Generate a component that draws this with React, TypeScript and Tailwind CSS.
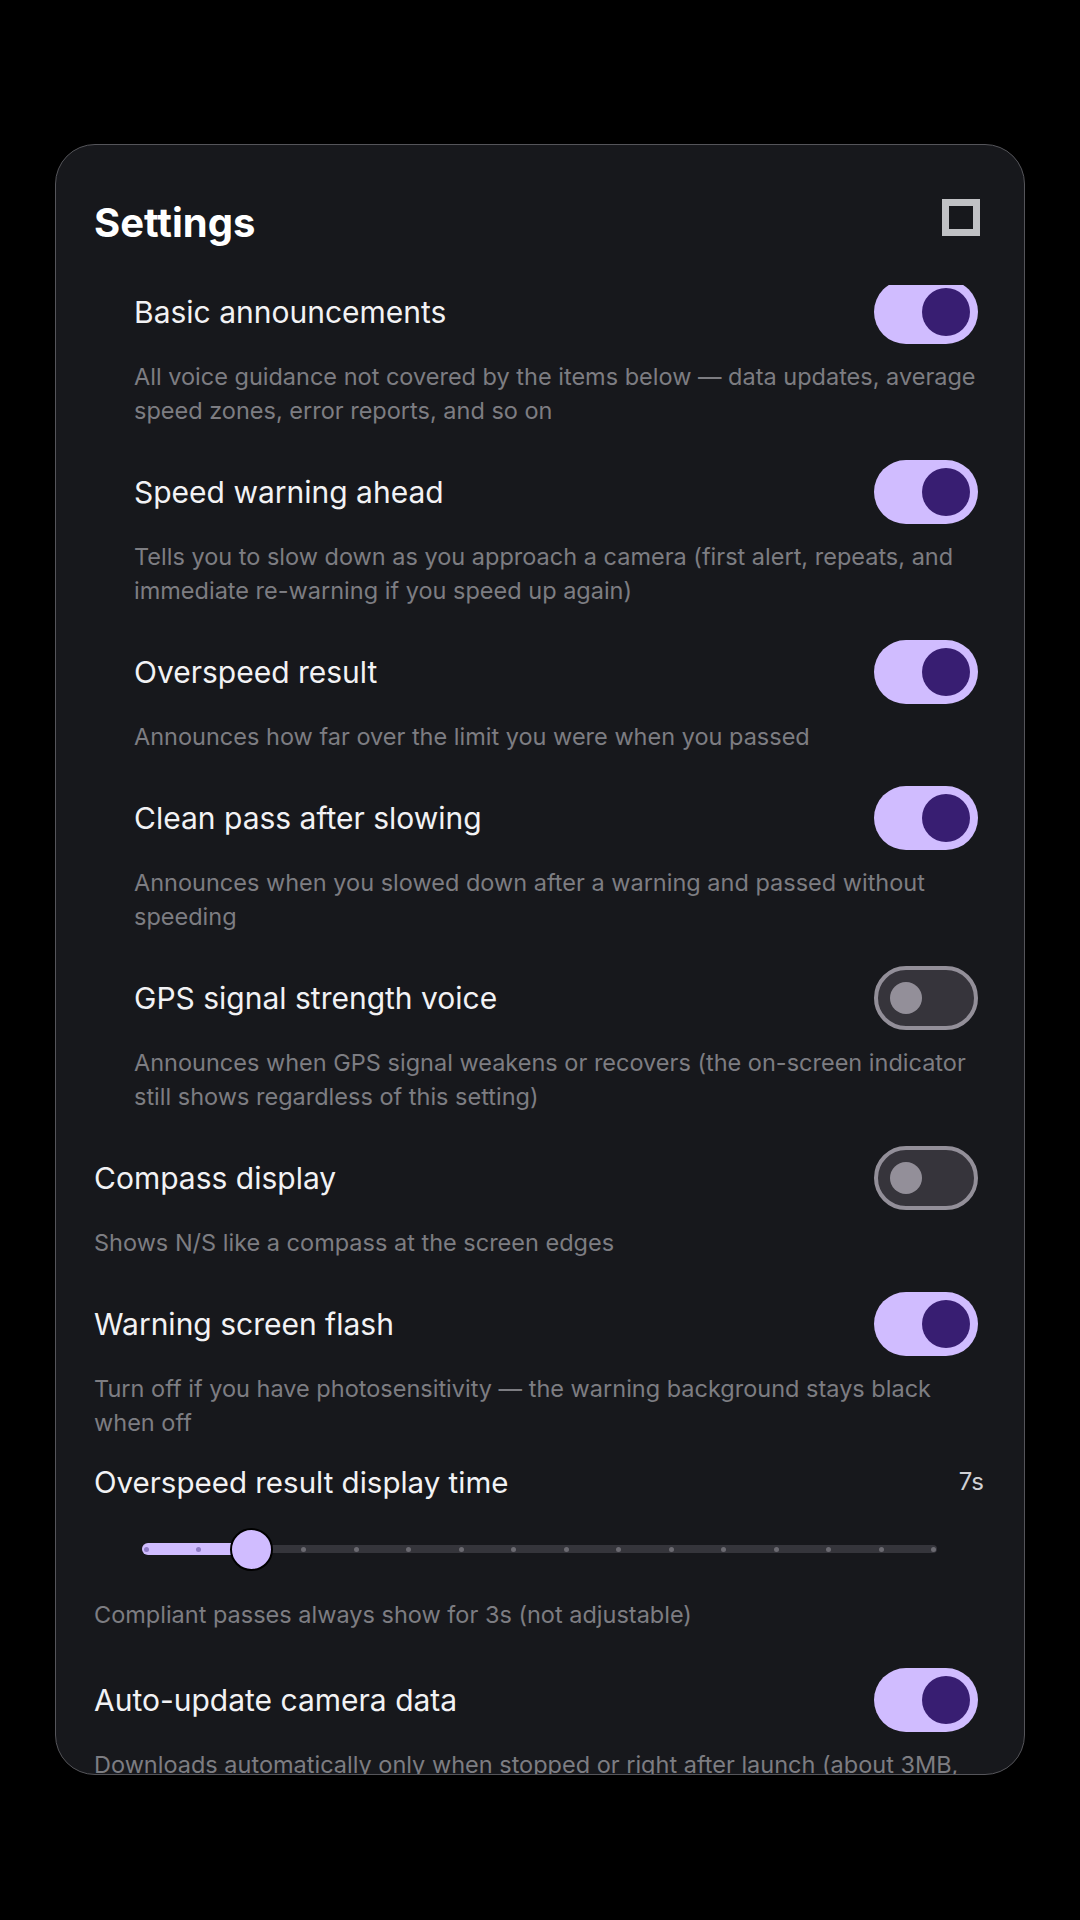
import React from "react";

type Item = {
  label: string;
  desc: string;
  on: boolean;
  nested?: boolean;
};

const items: Item[] = [
  {
    label: "Basic announcements",
    desc: "All voice guidance not covered by the items below — data updates, average speed zones, error reports, and so on",
    on: true,
    nested: true,
  },
  {
    label: "Speed warning ahead",
    desc: "Tells you to slow down as you approach a camera (first alert, repeats, and immediate re-warning if you speed up again)",
    on: true,
    nested: true,
  },
  {
    label: "Overspeed result",
    desc: "Announces how far over the limit you were when you passed",
    on: true,
    nested: true,
  },
  {
    label: "Clean pass after slowing",
    desc: "Announces when you slowed down after a warning and passed without speeding",
    on: true,
    nested: true,
  },
  {
    label: "GPS signal strength voice",
    desc: "Announces when GPS signal weakens or recovers (the on-screen indicator still shows regardless of this setting)",
    on: false,
    nested: true,
  },
  {
    label: "Compass display",
    desc: "Shows N/S like a compass at the screen edges",
    on: false,
  },
  {
    label: "Warning screen flash",
    desc: "Turn off if you have photosensitivity — the warning background stays black when off",
    on: true,
  },
];

function Toggle({ on }: { on: boolean }) {
  if (on) {
    return (
      <div className="mr-[6px] flex h-[64px] w-[104px] shrink-0 items-center justify-end rounded-full bg-[#d0bcff] pr-[8px]">
        <div className="h-[48px] w-[48px] rounded-full bg-[#381e72]" />
      </div>
    );
  }
  return (
    <div className="mr-[6px] flex h-[64px] w-[104px] shrink-0 items-center rounded-full border-[4px] border-[#938f99] bg-[#36343b] pl-[12px]">
      <div className="h-[32px] w-[32px] rounded-full bg-[#938f99]" />
    </div>
  );
}

function SettingRow({ item, first }: { item: Item; first?: boolean }) {
  return (
    <div
      className={`${item.nested ? "pl-[40px]" : ""} ${first ? "-mt-[5px]" : "mt-[32px]"}`}
    >
      <div className="flex h-[64px] items-center justify-between">
        <span className="text-[30px] leading-[40px] text-[#f2f2f4]">{item.label}</span>
        <Toggle on={item.on} />
      </div>
      <p className="mt-[16px] text-[23.5px] leading-[34px] text-[#7d7d82]">{item.desc}</p>
    </div>
  );
}

function Slider() {
  const steps = 15;
  const value = 2;
  const spacing = 52.53;
  const thumbX = 4 + value * spacing;
  return (
    <div className="relative ml-[48px] h-[48px] w-[795px]">
      <div className="absolute left-0 right-0 top-[20px] h-[8px] rounded-full bg-[#35353b]" />
      <div
        className="absolute left-0 top-[18px] h-[12px] rounded-l-full bg-[#d0bcff]"
        style={{ width: thumbX }}
      />
      {Array.from({ length: steps + 1 }).map((_, i) => (
        <div
          key={i}
          className={`absolute top-[21.5px] h-[5px] w-[5px] rounded-full ${i <= value ? "bg-[#8f7bc6]" : "bg-[#6b6a71]"}`}
          style={{ left: 4 + i * spacing - 2.5 }}
        />
      ))}
      <div
        className="absolute top-[2.5px] h-[43px] w-[43px] rounded-full border-2 border-black bg-[#d0bcff]"
        style={{ left: thumbX - 21.5 }}
      />
    </div>
  );
}

export default function App() {
  return (
    <div className="h-[1920px] w-[1080px] bg-black pl-[55px] pt-[144px] font-['Inter','Noto_Sans',sans-serif]">
      <div className="flex h-[1631px] w-[970px] flex-col overflow-hidden rounded-[40px] border-[1.5px] border-[#55555a] bg-[#17181c]">
        <div className="flex shrink-0 items-start justify-between pb-[38px] pl-[38px] pr-[40px] pt-[54px]">
          <h1 className="text-[40px] font-bold leading-[48px] text-white">Settings</h1>
          <div className="mr-[4px] h-[37px] w-[38px] border-[7px] border-[#c0c1c4]" />
        </div>

        <div className="flex-1 overflow-hidden pl-[38px] pr-[40px]">
          {items.map((item, i) => (
            <SettingRow key={item.label} item={item} first={i === 0} />
          ))}

          <div className="mt-[22px] flex h-[40px] items-center justify-between">
            <span className="text-[29.5px] leading-[40px] text-[#f2f2f4]">Overspeed result display time</span>
            <span className="text-[24px] leading-[40px] text-[#d0d0d4]">7s</span>
          </div>
          <div className="mt-[23px]">
            <Slider />
          </div>
          <p className="mt-[25px] text-[23.5px] leading-[34px] text-[#7d7d82]">
            Compliant passes always show for 3s (not adjustable)
          </p>

          <div className="mt-[36px]">
            <div className="flex h-[64px] items-center justify-between">
              <span className="text-[30px] leading-[40px] text-[#f2f2f4]">Auto-update camera data</span>
              <Toggle on={true} />
            </div>
            <p className="mt-[16px] text-[23.5px] leading-[34px] text-[#7d7d82]">
              Downloads automatically only when stopped or right after launch (about 3MB, once a week at most)
            </p>
          </div>
        </div>
      </div>
    </div>
  );
}
